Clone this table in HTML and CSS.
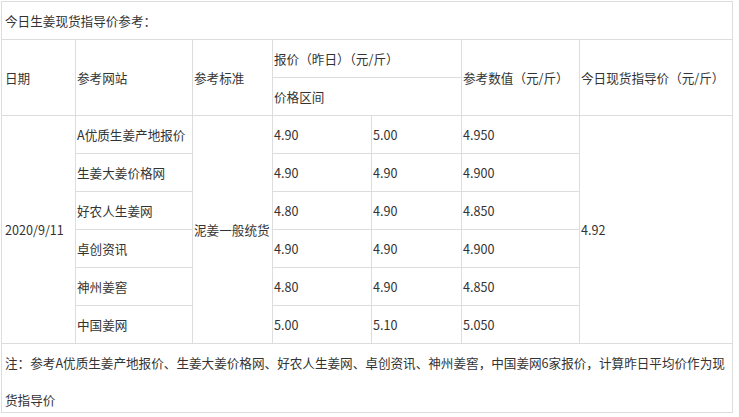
FILE: index.html
```html
<!DOCTYPE html>
<html lang="zh-CN">
<head>
<meta charset="utf-8">
<title>今日生姜现货指导价参考</title>
<link rel="stylesheet" href="styles.css">
</head>
<body>
<table class="price-table">
  <colgroup>
    <col class="c1"><col class="c2"><col class="c3"><col class="c4"><col class="c5"><col class="c6"><col class="c7">
  </colgroup>
  <tbody>
    <tr class="row">
      <td class="first" colspan="7">今日生姜现货指导价参考：</td>
    </tr>
    <tr class="row">
      <td class="first" rowspan="2">日期</td>
      <td rowspan="2">参考网站</td>
      <td rowspan="2">参考标准</td>
      <td colspan="2">报价（昨日）（元/斤）</td>
      <td rowspan="2">参考数值（元/斤）</td>
      <td rowspan="2">今日现货指导价（元/斤）</td>
    </tr>
    <tr class="row">
      <td colspan="2">价格区间</td>
    </tr>
    <tr class="row">
      <td class="first" rowspan="6">2020/9/11</td>
      <td>A优质生姜产地报价</td>
      <td rowspan="6">泥姜一般统货</td>
      <td>4.90</td>
      <td>5.00</td>
      <td>4.950</td>
      <td rowspan="6">4.92</td>
    </tr>
    <tr class="row">
      <td>生姜大姜价格网</td>
      <td>4.90</td>
      <td>4.90</td>
      <td>4.900</td>
    </tr>
    <tr class="row">
      <td>好农人生姜网</td>
      <td>4.80</td>
      <td>4.90</td>
      <td>4.850</td>
    </tr>
    <tr class="row">
      <td>卓创资讯</td>
      <td>4.90</td>
      <td>4.90</td>
      <td>4.900</td>
    </tr>
    <tr class="row">
      <td>神州姜窖</td>
      <td>4.80</td>
      <td>4.90</td>
      <td>4.850</td>
    </tr>
    <tr class="row">
      <td>中国姜网</td>
      <td>5.00</td>
      <td>5.10</td>
      <td>5.050</td>
    </tr>
    <tr>
      <td class="first note" colspan="7"><div class="note-text">注：参考A优质生姜产地报价、生姜大姜价格网、好农人生姜网、卓创资讯、神州姜窖，中国姜网6家报价，计算昨日平均价作为现货指导价</div></td>
    </tr>
  </tbody>
</table>
</body>
</html>
```
FILE: styles.css
```css
html, body {
  margin: 0;
  padding: 0;
  background: #ffffff;
}

body {
  padding: 1px 0 0 1px;
  font-family: "Noto Sans CJK SC", "Microsoft YaHei", sans-serif;
  font-size: 12.6px;
  color: #333333;
}

.price-table {
  border-collapse: collapse;
  table-layout: fixed;
  width: 732px;
}

.c1 { width: 74px; }
.c2 { width: 117px; }
.c3 { width: 80px; }
.c4 { width: 99px; }
.c5 { width: 90px; }
.c6 { width: 118px; }
.c7 { width: 153px; }

.price-table td {
  border: 1px solid #dddddd;
  padding: 0 1px;
  vertical-align: middle;
  text-align: left;
  line-height: 18px;
  white-space: nowrap;
}

.price-table .row td {
  height: 37px;
}

.price-table td.first {
  padding-left: 3px;
}

.price-table td.note {
  white-space: normal;
  vertical-align: top;
}

.note-text {
  height: 68px;
  line-height: 37px;
  overflow: visible;
}
```
